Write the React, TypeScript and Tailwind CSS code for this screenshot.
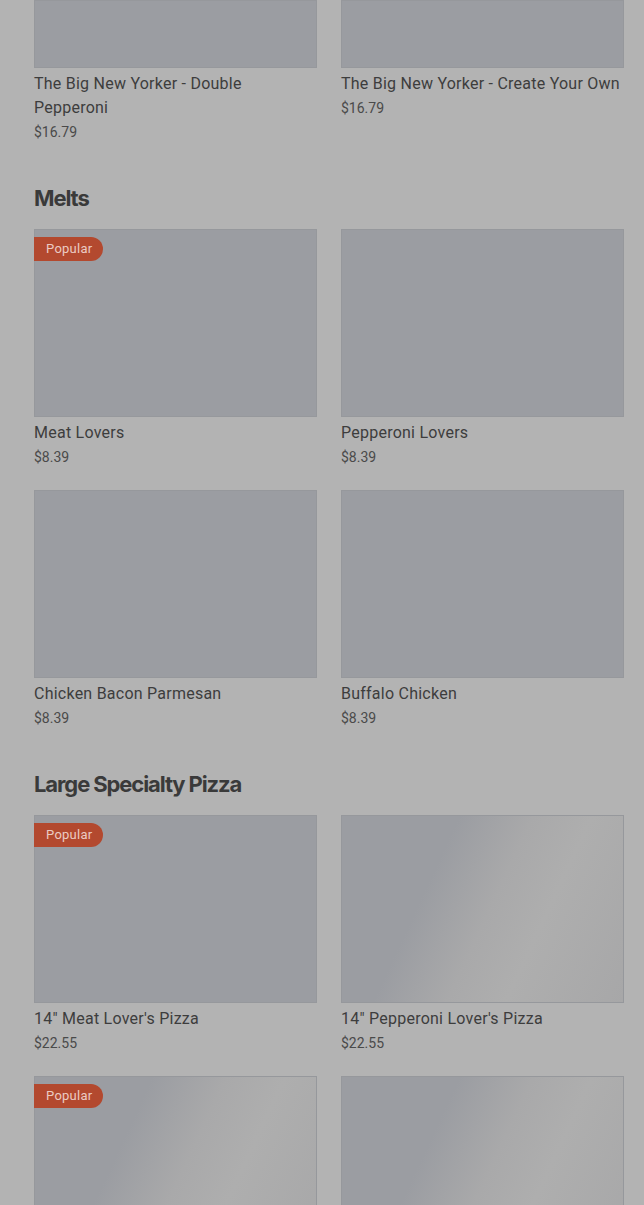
const font = { fontFamily: 'Roboto, "Noto Sans", sans-serif' };
const headFont = { fontFamily: 'Inter, "Noto Sans", sans-serif' };

type Item = { id: string; name?: string; price?: string; popular?: boolean; shimmer?: boolean };

// last row runs past the bottom of the view, so only its images show
const sections: { title?: string; items: Item[]; cut?: boolean }[] = [
  {
    cut: true,
    items: [
      { id: 'a1', name: 'The Big New Yorker - Double Pepperoni', price: '$16.79' },
      { id: 'a2', name: 'The Big New Yorker - Create Your Own', price: '$16.79' },
    ],
  },
  {
    title: 'Melts',
    items: [
      { id: 'm1', name: 'Meat Lovers', price: '$8.39', popular: true },
      { id: 'm2', name: 'Pepperoni Lovers', price: '$8.39' },
      { id: 'm3', name: 'Chicken Bacon Parmesan', price: '$8.39' },
      { id: 'm4', name: 'Buffalo Chicken', price: '$8.39' },
    ],
  },
  {
    title: 'Large Specialty Pizza',
    items: [
      { id: 'p1', name: '14" Meat Lover\'s Pizza', price: '$22.55', popular: true },
      { id: 'p2', name: '14" Pepperoni Lover\'s Pizza', price: '$22.55', shimmer: true },
      { id: 'p3', popular: true, shimmer: true },
      { id: 'p4', shimmer: true },
    ],
  },
];

function Card({ item, cut }: { item: Item; cut?: boolean }) {
  return (
    <div>
      <div
        className={`relative border border-[#96989c] ${cut ? 'h-[68px]' : 'h-[188px]'} ${
          item.shimmer
            ? 'bg-[linear-gradient(115deg,#9b9da2_0%,#9b9da2_32%,#a9a9aa_52%,#aeaeae_68%,#a7a7a8_100%)]'
            : 'bg-[#9b9da2]'
        }`}
      >
        {item.popular && (
          <span className="absolute left-[-1px] top-[7px] h-6 rounded-r-full bg-[#b3492f] pl-3 pr-[11px] text-[13px] leading-6 tracking-[0.02em] text-[#ebcbc3]">
            Popular
          </span>
        )}
      </div>
      {item.name && (
        <>
          <div className="mt-[4px] text-[16px] leading-6 tracking-[0.015em] text-[#3d3d3d]">{item.name}</div>
          <div className="text-[14px] leading-6 text-[#4a4a4a]">{item.price}</div>
        </>
      )}
    </div>
  );
}

export default function App() {
  return (
    <div className="h-[1205px] overflow-hidden bg-[#b3b3b3] pl-[34px] pr-[20px]" style={font}>
      {sections.map((s, i) => (
        <section key={i} className={i > 0 ? 'mt-[38px]' : ''}>
          {s.title && (
            <h2
              className="mb-[15px] text-[22px] font-bold leading-8 tracking-[-0.05em] text-[#3a3a3a]"
              style={headFont}
            >
              {s.title}
            </h2>
          )}
          <div className="grid grid-cols-2 gap-x-6 gap-y-[21px]">
            {s.items.map((it) => (
              <Card key={it.id} item={it} cut={s.cut} />
            ))}
          </div>
        </section>
      ))}
    </div>
  );
}
